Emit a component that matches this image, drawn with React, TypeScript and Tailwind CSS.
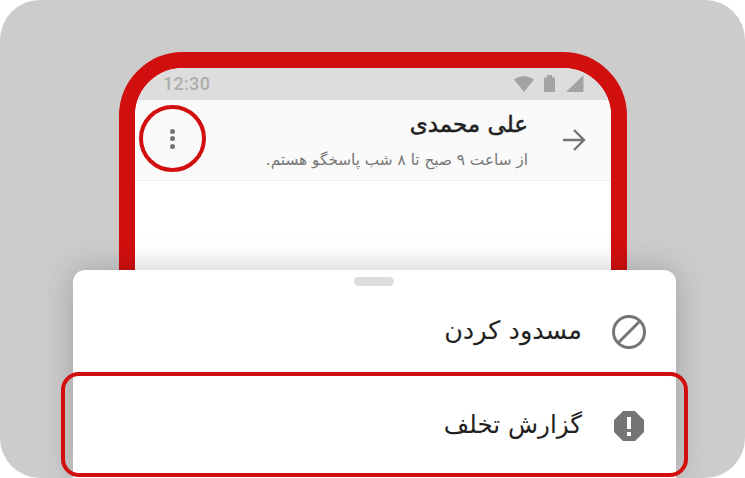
function Item({ label, children, height, size }: { label: string; children: React.ReactNode; height: string; size: string }) {
  return (
    <div dir="rtl" className={`flex items-center gap-[30px] pr-[30px] ${height}`}>
      <div className="flex h-[34px] w-[34px] items-center justify-center">{children}</div>
      <span className={`pb-[2px] font-['DejaVu_Sans',sans-serif] leading-none text-[#212121] ${size}`}>{label}</span>
    </div>
  );
}

export default function App() {
  return (
    <div className="relative h-[478px] w-[745px] overflow-hidden bg-white">
      <div className="h-full w-full overflow-hidden rounded-[40px] bg-[#cccccc] pl-[119px] pr-[118px] pt-[52px]">
        <div className="h-[500px] overflow-hidden rounded-t-[64px] border-[16px] border-[#d20f0f] bg-white">
          <div className="flex h-[32px] items-center justify-between bg-[#dddddd] pl-[28px] pr-[27px]">
            <span className="font-['Roboto',sans-serif] text-[18px] font-medium leading-none tracking-[0.3px] text-[#adadad]">12:30</span>
            <svg width="70" height="18" viewBox="0 0 70 18" fill="#a3a3a3">
              <path d="M0 4.5C5.5 0 14 0 20 4.5L10 17Z" />
              <path d="M30 2.5h3V0h5v2.5h3V17H30Z" />
              <path d="M69.5 0v17H52Z" />
            </svg>
          </div>
          <div dir="rtl" className="flex h-[81px] items-center border-b border-[#eeeeee] bg-[#fafafa] pr-[25px]">
            <svg width="24" height="24" viewBox="0 0 24 24" fill="none" stroke="#757575" strokeWidth="2.4">
              <path d="M1 12h21M12 2l10 10-10 10" />
            </svg>
            <div className="mb-[2px] mr-[34px] flex flex-col items-start">
              <span className="font-['DejaVu_Sans',sans-serif] text-[23px] leading-[32px] text-[#212121] [-webkit-text-stroke:0.5px_#212121]">علی محمدی</span>
              <span className="mt-[10px] font-['DejaVu_Sans',sans-serif] text-[15.3px] leading-[20px] text-[#757575]">از ساعت ۹ صبح تا ۸ شب پاسخگو هستم.</span>
            </div>
          </div>
        </div>
      </div>

      <div className="absolute left-[73px] top-[270px] h-[208px] w-[603px] rounded-t-[12px] bg-white shadow-[0_0_32px_rgba(0,0,0,0.22)]">
        <div className="ml-[281px] mt-[7px] h-[9px] w-[40px] rounded-full bg-[#dddddd]" />
        <div className="mt-[1px]">
          <Item label="مسدود کردن" height="h-[90px]" size="text-[25.5px]">
            <svg width="34" height="34" viewBox="0 0 34 34" fill="none" stroke="#757575" strokeWidth="3">
              <circle cx="17" cy="17" r="15.5" />
              <path d="M6 28 28 6" />
            </svg>
          </Item>
          <Item label="گزارش تخلف" height="h-[98px]" size="text-[24.6px]">
            <svg width="32" height="32" viewBox="0 0 32 32" fill="#757575">
              <path fillRule="evenodd" d="M10 1h12l9 9v12l-9 9H10l-9-9V10ZM14 7h4v12h-4Zm0 15h4v4h-4Z" />
            </svg>
          </Item>
        </div>
      </div>

      <div className="absolute left-[61px] top-[372px] h-[105px] w-[627px] rounded-[18px] border-[4px] border-[#d20f0f]" />
      <div className="absolute left-[139px] top-[105px] flex h-[67px] w-[67px] flex-col items-center justify-center gap-[2.5px] rounded-full border-[4px] border-[#d20f0f]">
        <span className="h-[5px] w-[5px] rounded-full bg-[#757575]" />
        <span className="h-[5px] w-[5px] rounded-full bg-[#757575]" />
        <span className="h-[5px] w-[5px] rounded-full bg-[#757575]" />
      </div>
    </div>
  );
}
